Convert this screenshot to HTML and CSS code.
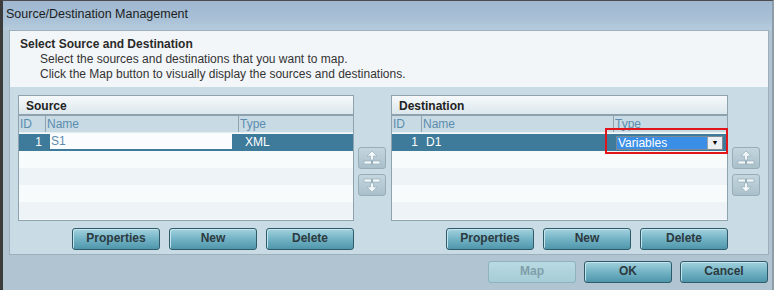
FILE: index.html
```html
<!DOCTYPE html>
<html>
<head>
<meta name="viewport" content="width=device-width, initial-scale=1">
<link rel="stylesheet" href="styles.css">
</head>
<body>

<div class="window">
  <div class="titlebar">Source/Destination Management</div>

  <div class="panel">
    <div class="intro">
      <h2>Select Source and Destination</h2>
      <p>Select the sources and destinations that you want to map.</p>
      <p>Click the Map button to visually display the sources and destinations.</p>
    </div>

    <div class="lists">
      <!-- source list -->
      <div class="group src">
        <div class="grid">
          <div class="gridTitle">Source</div>
          <div class="cols">
            <span class="cId">ID</span><span class="cName">Name</span><span class="cType">Type</span>
          </div>
          <div class="row selected">
            <span class="cId">1</span><span class="cName"><span class="edit">S1</span></span><span class="cType">XML</span>
          </div>
          <div class="row"></div>
          <div class="row"></div>
          <div class="row"></div>
          <div class="row"></div>
        </div>
        <div class="btnRow">
          <span class="btn">Properties</span>
          <span class="btn">New</span>
          <span class="btn">Delete</span>
        </div>
      </div>

      <div class="arrows">
        <span class="arrowBtn">
          <svg width="20" height="16" viewBox="0 0 20 16"><path d="M10 1 L15 6 H11.5 V10 H8.5 V6 H5 Z" fill="#f2f7f9" stroke="#8ea7b3" stroke-width="0.6"/><rect x="2" y="11" width="16" height="3" fill="#f2f7f9" stroke="#8ea7b3" stroke-width="0.6"/><rect x="9" y="11" width="2" height="3" fill="#97aeb9"/></svg>
        </span>
        <span class="arrowBtn">
          <svg width="20" height="16" viewBox="0 0 20 16"><rect x="2" y="2" width="16" height="3" fill="#f2f7f9" stroke="#8ea7b3" stroke-width="0.6"/><rect x="9" y="2" width="2" height="3" fill="#97aeb9"/><path d="M10 15 L15 10 H11.5 V6 H8.5 V10 H5 Z" fill="#f2f7f9" stroke="#8ea7b3" stroke-width="0.6"/></svg>
        </span>
      </div>

      <!-- destination list -->
      <div class="group dst">
        <div class="grid">
          <div class="gridTitle">Destination</div>
          <div class="cols">
            <span class="cId">ID</span><span class="cName">Name</span><span class="cType">Type</span>
          </div>
          <div class="row selected">
            <span class="cId">1</span><span class="cName">D1</span>
            <span class="cType">
              <span class="select"><span class="selText">Variables</span><span class="selBtn">&#9660;</span></span>
            </span>
          </div>
          <div class="row"></div>
          <div class="row"></div>
          <div class="row"></div>
          <div class="row"></div>
          <div class="mark"></div>
        </div>
        <div class="btnRow">
          <span class="btn">Properties</span>
          <span class="btn">New</span>
          <span class="btn">Delete</span>
        </div>
      </div>

      <div class="arrows">
        <span class="arrowBtn">
          <svg width="20" height="16" viewBox="0 0 20 16"><path d="M10 1 L15 6 H11.5 V10 H8.5 V6 H5 Z" fill="#f2f7f9" stroke="#8ea7b3" stroke-width="0.6"/><rect x="2" y="11" width="16" height="3" fill="#f2f7f9" stroke="#8ea7b3" stroke-width="0.6"/><rect x="9" y="11" width="2" height="3" fill="#97aeb9"/></svg>
        </span>
        <span class="arrowBtn">
          <svg width="20" height="16" viewBox="0 0 20 16"><rect x="2" y="2" width="16" height="3" fill="#f2f7f9" stroke="#8ea7b3" stroke-width="0.6"/><rect x="9" y="2" width="2" height="3" fill="#97aeb9"/><path d="M10 15 L15 10 H11.5 V6 H8.5 V10 H5 Z" fill="#f2f7f9" stroke="#8ea7b3" stroke-width="0.6"/></svg>
        </span>
      </div>
    </div>
  </div>

  <div class="footer">
    <span class="btn disabled">Map</span>
    <span class="btn">OK</span>
    <span class="btn">Cancel</span>
  </div>
</div>

</body>
</html>
```

FILE: styles.css
```css
body {
  margin: 0;
  font-family: "Liberation Sans", Arial, sans-serif;
  font-size: 12px;
  color: #222;
}

* {
  box-sizing: border-box;
}

/* Dialog frame */
.window {
  width: 774px;
  height: 290px;
  background: #b0c4d1;
  border-top: 1px solid #4d4d4d;
  border-left: 3px solid #3b3b3b;
  border-right: 2px solid #8e9ea8;
  overflow: hidden;
}

.titlebar {
  height: 29px;
  padding: 6px 0 0 3px;
  font-size: 12.5px;
  color: #1c1c1c;
  background: linear-gradient(#9fb8d0, #a8c0d6 60%, #b6cbdc);
}

/* Main panel */
.panel {
  margin: 0 3px 0 6px;
  height: 225px;
  background: #c9dbe4;
  border: 1px solid #9cb0bc;
}

.intro {
  height: 56px;
  padding: 6px 10px;
  background: #f3f6f9;
}

.intro h2 {
  margin: 0 0 1px;
  font-size: 12px;
  font-weight: bold;
  color: #2a2a2a;
}

.intro p {
  margin: 0;
  padding-left: 20px;
  line-height: 15px;
  color: #333;
}

.lists {
  display: flex;
  padding: 8px 0 0 8px;
}

.group {
  display: flex;
  flex-direction: column;
}

.src {
  width: 336px;
}

.dst {
  width: 337px;
}

/* List grid */
.grid {
  position: relative;
  height: 126px;
  border: 1px solid #8fa3af;
  background: #f7fafb;
}

.gridTitle {
  height: 20px;
  padding: 3px 7px;
  font-weight: bold;
  color: #222;
  background: linear-gradient(#f6f9fb, #dbe7ec);
  border-bottom: 2px solid #8da2ae;
}

.cols,
.row {
  display: flex;
  height: 17px;
}

.cols {
  background: #c8dae3;
  border-bottom: 1px solid #e6eef2;
  color: #5b8db0;
}

.cols span {
  border-right: 1px solid #8fa3af;
  padding: 1px;
}

.cols span.cType {
  border-right: none;
}

.row:nth-of-type(odd) {
  background: #edf3f6;
}

.row:nth-of-type(even) {
  background: #f8fbfc;
}

.row.selected {
  margin-top: 1px;
  background: #3e7b9a;
  color: #fff;
}

.row > span {
  padding: 1px 2px;
  flex-shrink: 0;
}

.src .cId { width: 27px; }
.src .cName { width: 193px; }
.src .cType { flex: 1; }

.dst .cId { width: 30px; }
.dst .cName { width: 192px; }
.dst .cType { flex: 1; }

.row .cId {
  text-align: right;
  padding-right: 4px;
}

.row .cName {
  padding-left: 4px;
}

.src .row .cName {
  padding: 1px 7px 1px 4px;
}

.row .cType {
  padding-left: 6px;
}

.dst .row .cType {
  padding: 2px 0 0 2px;
}

.edit {
  display: block;
  height: 15px;
  margin-top: -1px;
  padding: 0 1px;
  background: #fbfcfd;
  color: #5c8cae;
}

/* Dropdown in the type cell */
.select {
  display: flex;
  width: 107px;
  height: 14px;
  background: #fff;
  border: 1px solid #7b8a94;
}

.selText {
  flex: 1;
  padding-left: 1px;
  line-height: 12px;
  background: #3a8ee6;
  color: #fff;
}

.selBtn {
  width: 15px;
  font-size: 7px;
  line-height: 12px;
  text-align: center;
  color: #000;
  background: #eceff1;
  border-left: 1px solid #9aa4aa;
}

/* red annotation box */
.mark {
  position: absolute;
  left: 213px;
  top: 32px;
  width: 123px;
  height: 26px;
  border: 2px solid #e0161b;
}

/* Buttons */
.btnRow {
  display: flex;
  justify-content: flex-end;
  gap: 9px;
  margin-top: 7px;
}

.btn {
  display: inline-block;
  width: 88px;
  height: 22px;
  line-height: 19px;
  text-align: center;
  font-weight: bold;
  font-size: 12px;
  color: #2c3a40;
  background: linear-gradient(#a2d2de, #73b3c5 50%, #4f96ab);
  border: 1px solid #2f5a69;
  border-radius: 3px;
  box-shadow: inset 1px 1px 0 #c3e4ec;
}

.btn.disabled {
  color: #7f9ea9;
  background: linear-gradient(#b9dae3, #a5ccd7);
  border-color: #8eb3bf;
  box-shadow: none;
}

.arrows {
  display: flex;
  flex-direction: column;
  gap: 5px;
  padding-top: 52px;
  margin: 0 5px 0 4px;
}

.arrowBtn {
  display: flex;
  align-items: center;
  justify-content: center;
  width: 28px;
  height: 22px;
  background: linear-gradient(#c4d6df, #a9c0cb);
  border: 1px solid #97adb8;
  border-radius: 3px;
}

.footer {
  display: flex;
  justify-content: flex-end;
  gap: 8px;
  padding: 6px 4px 0 0;
}
```
